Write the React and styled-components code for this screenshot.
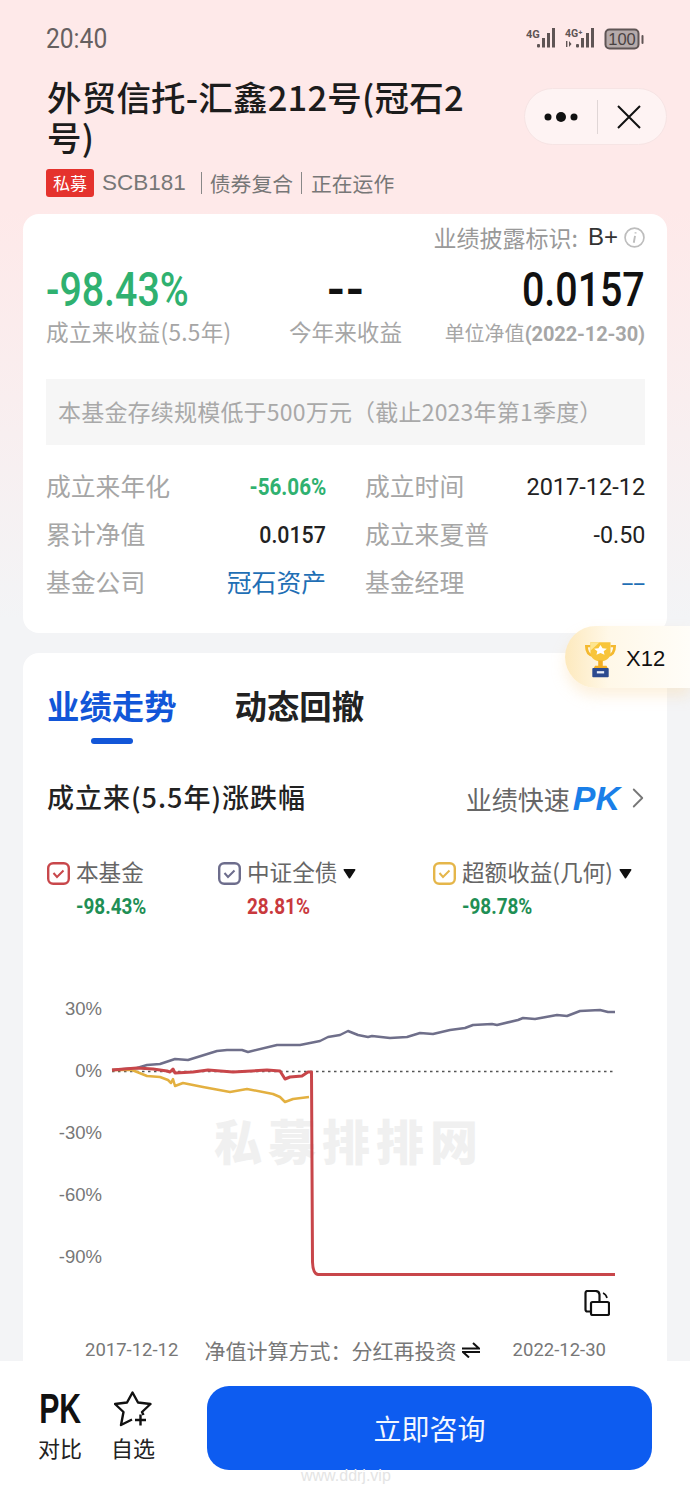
import React from 'react';
import styled, { createGlobalStyle } from 'styled-components';
import { ChevronRight } from 'lucide-react';

const CJK = '"Noto Sans CJK SC", "Noto Sans", sans-serif';
const DIGITS = 'Roboto, "Noto Sans CJK SC", sans-serif';

const COLORS = {
  green: '#2fb170',
  darkGreen: '#1f8f55',
  red: '#c9393d',
  gray: '#a6a6a6',
  text: '#222222',
  blue: '#1256d8',
};

const GlobalStyle = createGlobalStyle`
  html, body { margin: 0; padding: 0; background: #f3f4f6; }
  * { box-sizing: border-box; }
`;

const Page = styled.div`
  position: relative;
  width: 690px;
  height: 1495px;
  display: flex;
  flex-direction: column;
  overflow: hidden;
  font-family: ${CJK};
  background: linear-gradient(180deg, #fee9e9 0, #fee9e9 210px, #f3f4f6 620px);
`;

const Main = styled.div`
  flex: 1;
  min-height: 0;
`;

const StatusBar = styled.div`
  height: 78px;
  display: flex;
  align-items: center;
  justify-content: space-between;
  padding: 0 45px 0 46px;
`;

const Time = styled.span`
  display: inline-block;
  font-family: ${DIGITS};
  font-size: 27px;
  color: #666060;
  transform: scaleX(0.91);
  transform-origin: left center;
`;

const Header = styled.div`
  display: flex;
  justify-content: space-between;
  padding: 0 23px 0 47px;
`;

const Title = styled.h1`
  width: 425px;
  margin: -2px 0 0;
  font-size: 34.5px;
  line-height: 40px;
  font-weight: 500;
  letter-spacing: 0.2px;
  color: #1c1c1c;
  word-break: break-all;
`;

const Capsule = styled.div`
  width: 143px;
  height: 57px;
  margin-top: 10px;
  display: flex;
  align-items: center;
  justify-content: space-between;
  padding: 0 24px 0 19px;
  border-radius: 29px;
  border: 1px solid #f6e4e4;
  background: rgba(255, 255, 255, 0.45);
`;

const CapsuleDivider = styled.span`
  width: 1px;
  height: 34px;
  background: #e0d6d6;
`;

const TagRow = styled.div`
  display: flex;
  align-items: center;
  height: 32px;
  margin-top: 11px;
  padding-left: 46px;
  color: #777777;
  font-size: 20.8px;
`;

const Tag = styled.span`
  width: 48px;
  height: 28px;
  margin-right: 8px;
  border-radius: 3px;
  background: #e5322d;
  color: #fff;
  font-size: 17px;
  line-height: 28px;
  text-align: center;
`;

const Code = styled.span`
  font-family: "Liberation Sans", sans-serif;
  font-size: 22.5px;
  margin-right: 15px;
`;

const Sep = styled.span`
  width: 1px;
  height: 22px;
  background: #888;
  margin: ${p => p.$first ? '0 8px 0 0' : '0 9px 0 8px'};
`;

const Card = styled.section`
  margin: ${p => p.$top}px 23px 0;
  background: #fff;
  border-radius: 16px;
`;

const SummaryCard = styled(Card)`
  height: 419px;
  padding: 0 22px 0 23px;
`;

const Disclosure = styled.div`
  height: 46px;
  display: flex;
  align-items: center;
  justify-content: flex-end;
  color: #999;
  font-size: 23px;
`;

const Grade = styled.span`
  margin: 0 6px 0 10px;
  color: #333;
  font-family: "Liberation Sans", sans-serif;
  font-size: 24px;
`;

const Metrics = styled.div`
  display: grid;
  grid-template-columns: 1fr auto 1fr;
  margin-top: 5px;
`;

const Metric = styled.div`
  display: flex;
  flex-direction: column;
  align-items: ${p => p.$align};
`;

const MetricValue = styled.div`
  height: 50px;
  font-family: ${DIGITS};
  font-size: 48px;
  line-height: 50px;
  font-weight: ${p => p.$weight || 500};
  color: ${p => p.$color};
  transform: scaleX(${p => p.$x});
  transform-origin: ${p => p.$origin} center;
`;

const MetricLabel = styled.div`
  height: 30px;
  margin-top: 2px;
  font-size: 22.6px;
  line-height: 30px;
  letter-spacing: ${p => p.$spacing || 0}px;
  color: ${COLORS.gray};
  white-space: nowrap;
`;

const SmallLabel = styled.span`
  font-size: 20px;
`;

const DateLabel = styled.span`
  font-family: ${DIGITS};
  font-size: 20px;
  font-weight: 700;
  letter-spacing: -0.1px;
`;

const Notice = styled.div`
  height: 66px;
  margin-top: 32px;
  padding-left: 12px;
  background: #f6f6f6;
  color: #a9a9a9;
  font-size: 23px;
  line-height: 64px;
  letter-spacing: 0.2px;
  white-space: nowrap;
`;

const Details = styled.div`
  display: grid;
  grid-template-columns: 280px 280px;
  column-gap: 39px;
  margin-top: 18px;
`;

const DetailRow = styled.div`
  height: 48px;
  display: flex;
  align-items: center;
  justify-content: space-between;
`;

const DetailLabel = styled.span`
  margin-bottom: 4px;
  font-size: 24.8px;
  color: ${COLORS.gray};
`;

const DetailValue = styled.span`
  display: inline-block;
  font-family: ${p => p.$cjk ? CJK : DIGITS};
  font-size: ${p => p.$cjk ? 24.8 : 24}px;
  font-weight: ${p => p.$weight || 400};
  color: ${p => p.$color || '#222'};
  transform: scaleX(${p => p.$x || 1});
  transform-origin: right center;
  margin-bottom: ${p => p.$cjk ? 4 : 0}px;
`;

const ChartCard = styled(Card)`
  height: 708px;
  padding-top: 30px;
  border-radius: 16px 16px 0 0;
`;

const Tabs = styled.div`
  display: flex;
  gap: 58px;
  padding-left: 24px;
`;

const Tab = styled.span`
  font-size: 32.4px;
  line-height: 44px;
  font-weight: 700;
  color: ${p => p.$active ? COLORS.blue : '#222'};
`;

const TabBar = styled.div`
  width: 42px;
  height: 6px;
  margin: 11px 0 0 68px;
  border-radius: 3px;
  background: ${COLORS.blue};
`;

const SubHeader = styled.div`
  height: 40px;
  margin-top: 34px;
  padding: 0 12px 0 24px;
  display: flex;
  align-items: center;
  justify-content: space-between;
`;

const RangeTitle = styled.span`
  margin-bottom: 4px;
  font-size: 27px;
  letter-spacing: 1px;
  color: #222;
  font-weight: 500;
`;

const QuickPk = styled.span`
  display: flex;
  align-items: center;
  font-size: 26px;
  color: #666;
`;

const PkMark = styled.span`
  margin: 0 1px 0 3px;
  font-family: "Liberation Sans", sans-serif;
  font-size: 34px;
  font-weight: 700;
  font-style: italic;
  color: #1a7fe8;
`;

const Legend = styled.div`
  display: grid;
  grid-template-columns: 171px 215px 1fr;
  margin-top: 40px;
  padding-left: 24px;
`;

const LegendItem = styled.div`
  display: flex;
  flex-direction: column;
`;

const LegendHead = styled.div`
  height: 30px;
  display: flex;
  align-items: center;
  gap: 6px;
  font-size: 22.6px;
  color: #666;
  white-space: nowrap;
`;

const LegendName = styled.span`
  margin-bottom: 4px;
`;

const LegendValue = styled.div`
  height: 26px;
  margin: 6px 0 0 29px;
  font-family: ${DIGITS};
  font-size: 22px;
  line-height: 26px;
  font-weight: 700;
  color: ${p => p.$color};
  transform: scaleX(0.86);
  transform-origin: left center;
`;

const ChartSvg = styled.svg`
  display: block;
  margin-top: 70px;
`;

const AxisLabel = styled.text`
  font-family: "Liberation Sans", sans-serif;
  font-size: 18.5px;
  fill: #777;
  text-anchor: end;
`;

const ChartWatermark = styled.text`
  font-family: ${CJK};
  font-size: 48px;
  font-weight: 900;
  letter-spacing: 6px;
  fill: #f0f0f0;
`;

const RotateRow = styled.div`
  height: 26px;
  display: flex;
  justify-content: flex-end;
  padding-right: 57px;
`;

const BasisRow = styled.div`
  height: 22px;
  margin-top: 23px;
  padding: 0 61px 0 62px;
  display: flex;
  align-items: center;
  justify-content: space-between;
  color: #777;
  white-space: nowrap;
`;

const AxisDate = styled.span`
  font-family: ${DIGITS};
  font-size: 18.5px;
  line-height: 20px;
`;

const Basis = styled.span`
  display: flex;
  align-items: center;
  gap: 5px;
  margin-right: 7px;
  font-size: 21px;
  line-height: 20px;
`;

const Footer = styled.footer`
  height: 134px;
  display: flex;
  align-items: flex-start;
  padding: 25px 38px 0 38px;
  background: #fff;
`;

const FooterAction = styled.div`
  width: ${p => p.$width}px;
  margin-left: ${p => p.$left || 0}px;
  display: flex;
  flex-direction: column;
  align-items: center;
  color: #222;
  font-size: 22px;
  line-height: 30px;
`;

const FooterIcon = styled.div`
  height: 46px;
  display: flex;
  align-items: center;
  justify-content: center;
`;

const PkText = styled.span`
  display: inline-block;
  font-family: "Liberation Sans", sans-serif;
  font-size: 42px;
  font-weight: 700;
  color: #111;
  transform: scaleX(0.72);
`;

const ConsultButton = styled.button`
  width: 445px;
  height: 84px;
  margin-left: 49px;
  border: 0;
  border-radius: 22px;
  background: #0d5cf0;
  color: #f2f7ff;
  font-family: ${CJK};
  font-size: 28px;
`;

const SiteMark = styled.span`
  position: absolute;
  left: 301px;
  top: 1465px;
  font-family: "Liberation Sans", sans-serif;
  font-size: 16px;
  line-height: 22px;
  color: #e4e4e4;
`;

const Badge = styled.div`
  position: absolute;
  top: 626px;
  right: 0;
  width: 125px;
  height: 62px;
  display: flex;
  align-items: center;
  gap: 10px;
  padding: 3px 0 0 20px;
  border-radius: 31px 0 0 31px;
  background: linear-gradient(90deg, #fde9bd 0, #fff8e8 35%, #fffdf8 100%);
  box-shadow: 0 8px 14px rgba(250, 215, 160, 0.35);
  font-family: "Liberation Sans", sans-serif;
  font-size: 22px;
  color: #111;
`;

const Caret = () => (
  <svg width="13" height="11" viewBox="0 0 14 12">
    <path d="M1.5 2h11L7 10.500z" fill="#111" stroke="#111" strokeWidth="2" strokeLinejoin="round" />
  </svg>
);

const CheckBox = ({ color }) => (
  <svg width="23" height="23" viewBox="0 0 23 23" fill="none">
    <rect x="1.200" y="1.200" width="20.600" height="20.600" rx="5" stroke={color} strokeWidth="2.400" />
    <path d="M6.500 11l3.500 4 6.500-6.500" stroke={color} strokeWidth="2" />
  </svg>
);

const SignalIcon = () => (
  <svg width="119" height="24" viewBox="0 0 119 24" fill="#5f5555">
    <text x="0" y="11" fontSize="11" fontWeight="700" fontFamily="Roboto, sans-serif">4G</text>
    <rect x="11" y="17" width="3" height="3.500" rx="1" />
    <rect x="16" y="11" width="3" height="9.500" />
    <rect x="21" y="6" width="3" height="14.500" />
    <rect x="26" y="1" width="3" height="19.500" />
    <text x="39" y="10" fontSize="10.500" fontWeight="700" fontFamily="Roboto, sans-serif">4G⁺</text>
    <path d="M40 14v6h1.400v-6zM43 14l2.500 3-2.500 3z" />
    <rect x="50" y="17" width="3" height="3.500" rx="1" />
    <rect x="55" y="11" width="3" height="9.500" />
    <rect x="60" y="6" width="3" height="14.500" />
    <rect x="65" y="1" width="3" height="19.500" />
    <rect x="79.500" y="2.500" width="33" height="19" rx="4" fill="#b5aaaa" stroke="#5f5555" strokeWidth="2" />
    <text x="96" y="18" fontSize="16.500" textAnchor="middle" fontFamily="Liberation Sans, sans-serif" fill="#4a4242">100</text>
    <rect x="115.500" y="8" width="2" height="9" rx="1" />
  </svg>
);

const DotsIcon = () => (
  <svg width="34" height="14" viewBox="0 0 34 14" fill="#111">
    <circle cx="4" cy="7" r="3.500" />
    <circle cx="17" cy="7" r="5" />
    <circle cx="30" cy="7" r="3.500" />
  </svg>
);

const CloseIcon = () => (
  <svg width="26" height="26" viewBox="0 0 26 26" stroke="#111" strokeWidth="2" fill="none">
    <path d="M2 2l22 22M24 2L2 24" />
  </svg>
);

const InfoIcon = () => (
  <svg width="21" height="21" viewBox="0 0 20 20" fill="none">
    <circle cx="10" cy="10" r="9" stroke="#bdbdbd" strokeWidth="1.600" />
    <path d="M11 5v1.200M10.500 8.500l-1.200 6.500" stroke="#bdbdbd" strokeWidth="1.800" />
  </svg>
);

const TrophyIcon = () => (
  <svg width="31" height="38" viewBox="0 0 34 50" preserveAspectRatio="none">
    <path d="M6 8H1.500c0 8 3 12 7.500 13M28 8h4.500c0 8-3 12-7.500 13" fill="none" stroke="#f4b92f" strokeWidth="3" />
    <path d="M6 3h22v13c0 8-5 12-11 12S6 24 6 16z" fill="#f8c53a" />
    <path d="M6 3h10L6 14z" fill="#fde58f" />
    <path d="M17 6.500l2.200 4.300 4.800.7-3.500 3.300.9 4.700-4.400-2.300-4.400 2.300.9-4.700L10 11.500l4.800-.7z" fill="#fff" />
    <path d="M14.500 27h5v7h4l2 4H9l2-4h3.500z" fill="#f3ae22" />
    <rect x="8" y="37" width="18" height="12" rx="1" fill="#2c4a8f" />
    <rect x="13" y="41" width="8" height="3" fill="#e9eef8" />
  </svg>
);

const RotateIcon = () => (
  <svg width="26" height="26" viewBox="0 0 26 26" fill="none" stroke="#111" strokeWidth="2.200">
    <path d="M6 21.500H3.500a2 2 0 0 1-2-2V3a2 2 0 0 1 2-2h8a4 4 0 0 1 4 3.500V12" />
    <rect x="7" y="12" width="18" height="13" rx="1.500" />
    <path d="M19 3c2 .8 3.500 2.500 4 5" strokeWidth="1.600" />
  </svg>
);

const SwapIcon = () => (
  <svg width="18" height="16" viewBox="0 0 18 16" fill="none" stroke="#111" strokeWidth="2">
    <path d="M0 6.500h17L11 1" />
    <path d="M18 10H1l6 5.500" />
  </svg>
);

const StarIcon = () => (
  <svg width="38" height="36" viewBox="0 0 38 36" fill="none" stroke="#111" strokeWidth="2.400" strokeLinejoin="round">
    <path d="M29.500 24L28 21l8.500-8L24 11.500 18.500 1.500 13 11.500 1 13l8.500 8L7 34l11-5.500" />
    <path d="M21 29h11M26.500 23.500v11" />
  </svg>
);

const GRAY_LINE = 'M112 1070L137 1068L147 1065L160 1064L175 1059L188 1060L217 1051L227 1050L242 1050L248 1052L277 1045L300 1045L320 1041L328 1037L340 1035L348 1031L358 1035L368 1037L372 1036L390 1038L407 1037L420 1033L433 1034L450 1030L465 1028L473 1025L492 1024L497 1025L518 1020L523 1018L535 1019L557 1015L567 1016L580 1011L600 1010L608 1012L615 1012';
const YELLOW_LINE = 'M112 1070L132 1070L137 1072L147 1076L160 1077L168 1080L171 1083L173 1079L175 1086L183 1083L203 1087L230 1092L247 1089L273 1094L280 1097L285 1102L293 1099L309 1097';
const RED_LINE = 'M112 1070L137 1068L153 1069L167 1071L170 1072L173 1069L175 1073L193 1072L208 1070L233 1072L267 1070L280 1071L285 1079L290 1077L302 1076L308 1072L311.500 1072L312.500 1262Q313 1274 318 1274.500L615 1274.500';

const AXIS = [['30%', 1008], ['0%', 1070], ['-30%', 1132], ['-60%', 1194], ['-90%', 1256]];

const DETAILS = [
  ['成立来年化', '-56.06%', { $color: COLORS.green, $weight: 700, $x: 0.86 }],
  ['成立时间', '2017-12-12', { $x: 0.98 }],
  ['累计净值', '0.0157', { $weight: 500, $x: 0.89 }],
  ['成立来夏普', '-0.50', { $x: 0.97 }],
  ['基金公司', '冠石资产', { $color: '#1f6fb5', $cjk: true }],
  ['基金经理', '--', { $color: '#1f6fb5', $x: 1.8 }],
];

const LEGEND = [
  { name: '本基金', value: '-98.43%', box: '#c8474b', color: COLORS.darkGreen },
  { name: '中证全债', value: '28.81%', box: '#6d6d8c', color: COLORS.red, caret: true },
  { name: '超额收益(几何)', value: '-98.78%', box: '#e5b64a', color: COLORS.darkGreen, caret: true },
];

const App = () => (
  <Page>
    <GlobalStyle />
    <Main>
      <StatusBar>
        <Time>20:40</Time>
        <SignalIcon />
      </StatusBar>
      <Header>
        <Title>外贸信托-汇鑫212号(冠石2号)</Title>
        <Capsule>
          <DotsIcon />
          <CapsuleDivider />
          <CloseIcon />
        </Capsule>
      </Header>
      <TagRow>
        <Tag>私募</Tag>
        <Code>SCB181</Code>
        <Sep $first />
        债券复合
        <Sep />
        正在运作
      </TagRow>

      <SummaryCard $top={15}>
        <Disclosure>
          业绩披露标识:
          <Grade>B+</Grade>
          <InfoIcon />
        </Disclosure>
        <Metrics>
          <Metric $align="flex-start">
            <MetricValue $color={COLORS.green} $x={0.82} $origin="left">-98.43%</MetricValue>
            <MetricLabel $spacing={0.3}>成立来收益(5.5年)</MetricLabel>
          </Metric>
          <Metric $align="center">
            <MetricValue $color="#111" $x={1} $origin="center" $weight={700}>--</MetricValue>
            <MetricLabel>今年来收益</MetricLabel>
          </Metric>
          <Metric $align="flex-end">
            <MetricValue $color="#111" $x={0.82} $origin="right">0.0157</MetricValue>
            <MetricLabel>
              <SmallLabel>单位净值</SmallLabel>
              <DateLabel>(2022-12-30)</DateLabel>
            </MetricLabel>
          </Metric>
        </Metrics>
        <Notice>本基金存续规模低于500万元（截止2023年第1季度）</Notice>
        <Details>
          {DETAILS.map(([label, value, props]) => (
            <DetailRow key={label}>
              <DetailLabel>{label}</DetailLabel>
              <DetailValue {...props}>{value}</DetailValue>
            </DetailRow>
          ))}
        </Details>
      </SummaryCard>

      <ChartCard $top={20}>
        <Tabs>
          <Tab $active>业绩走势</Tab>
          <Tab>动态回撤</Tab>
        </Tabs>
        <TabBar />
        <SubHeader>
          <RangeTitle>成立来(5.5年)涨跌幅</RangeTitle>
          <QuickPk>
            业绩快速<PkMark>PK</PkMark>
            <ChevronRight size={34} strokeWidth={1.3} color="#777" />
          </QuickPk>
        </SubHeader>
        <Legend>
          {LEGEND.map(item => (
            <LegendItem key={item.name}>
              <LegendHead>
                <CheckBox color={item.box} />
                <LegendName>{item.name}</LegendName>
                {item.caret && <Caret />}
              </LegendHead>
              <LegendValue $color={item.color}>{item.value}</LegendValue>
            </LegendItem>
          ))}
        </Legend>
        <ChartSvg width="644" height="300" viewBox="23 990 644 300" fill="none">
          <ChartWatermark x="214" y="1160">私募排排网</ChartWatermark>
          {AXIS.map(([label, y]) => (
            <AxisLabel key={label} x="102" y={y + 7}>{label}</AxisLabel>
          ))}
          <path d="M112 1071.500H615" stroke="#555" strokeWidth="1.500" strokeDasharray="2.500 3.500" />
          <path d={GRAY_LINE} stroke="#6f6f8a" strokeWidth="2.500" strokeLinejoin="round" />
          <path d={YELLOW_LINE} stroke="#e3b040" strokeWidth="2.500" strokeLinejoin="round" />
          <path d={RED_LINE} stroke="#c8464a" strokeWidth="3" strokeLinejoin="round" />
        </ChartSvg>
        <RotateRow>
          <RotateIcon />
        </RotateRow>
        <BasisRow>
          <AxisDate>2017-12-12</AxisDate>
          <Basis>净值计算方式：分红再投资<SwapIcon /></Basis>
          <AxisDate>2022-12-30</AxisDate>
        </BasisRow>
      </ChartCard>
    </Main>

    <Footer>
      <FooterAction $width={44}>
        <FooterIcon><PkText>PK</PkText></FooterIcon>
        对比
      </FooterAction>
      <FooterAction $width={50} $left={26}>
        <FooterIcon><StarIcon /></FooterIcon>
        自选
      </FooterAction>
      <ConsultButton>立即咨询</ConsultButton>
    </Footer>

    <Badge>
      <TrophyIcon />
      X12
    </Badge>
    <SiteMark>www.ddrj.vip</SiteMark>
  </Page>
);

export default App;
